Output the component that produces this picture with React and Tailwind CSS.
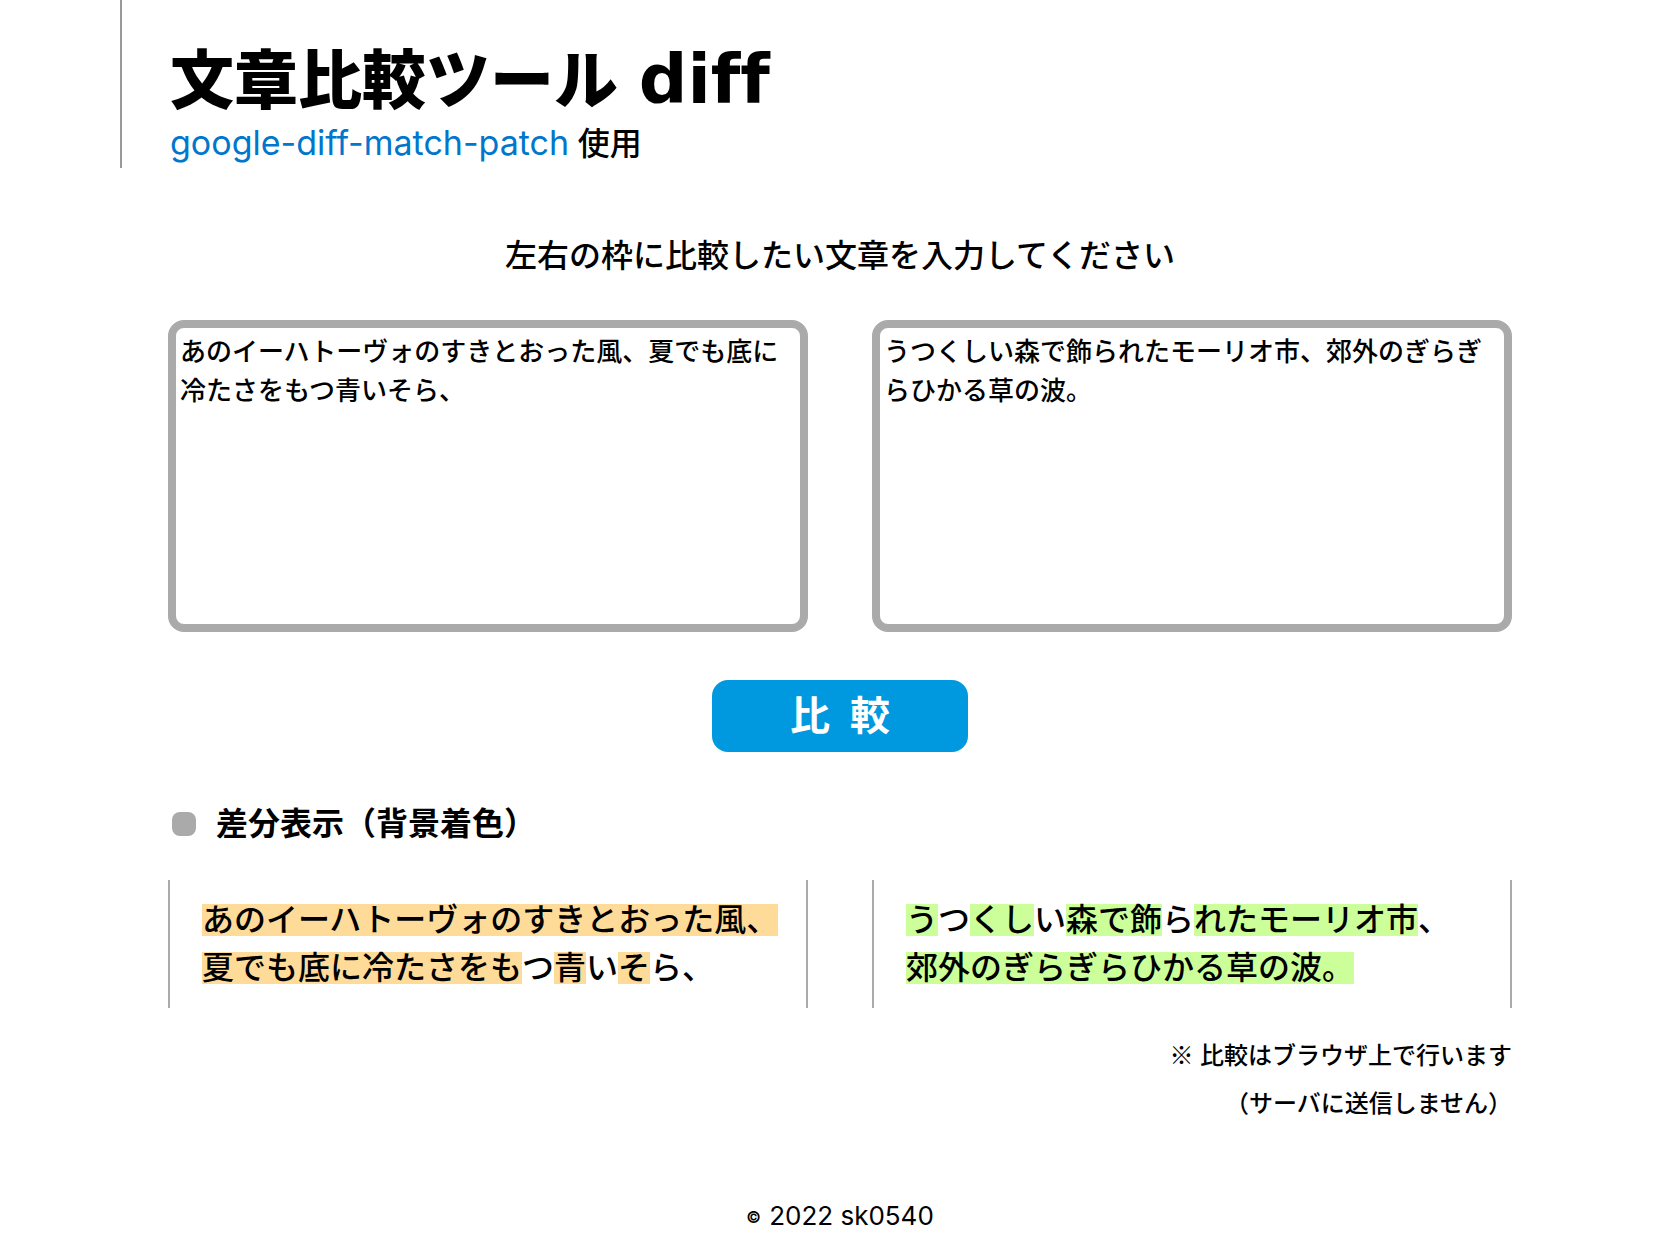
function Del({ children }) {
  return <del className="inline-block bg-[#ffdb99] leading-8 whitespace-nowrap no-underline">{children}</del>;
}

function Ins({ children }) {
  return <ins className="inline-block bg-[#ccff99] leading-8 whitespace-nowrap no-underline">{children}</ins>;
}

export default function App() {
  return (
    <div className="min-h-screen bg-white px-[120px] font-['Inter','Noto_Sans_CJK_JP',sans-serif] text-[32px] leading-[48px] font-medium text-black">
      <header className="h-[168px] border-l-2 border-[#999999] pl-12 pt-10">
        <h1 className="text-[64px] font-black leading-[80px]">
          文章比較ツール <span className="ml-2 font-['DejaVu_Sans'] text-[68px] leading-none font-bold [font-variant-ligatures:none]">diff</span>
        </h1>
        <p>
          <a href="#patch" className="text-[34px] leading-none font-normal text-[#0077cc]">google-diff-match-patch</a> 使用
        </p>
      </header>
      <main className="px-12 pt-16">
        <p className="text-center">左右の枠に比較したい文章を入力してください</p>
        <form onSubmit={(e) => e.preventDefault()}>
          <div className="mt-10 grid grid-cols-2 gap-16">
            <textarea
              aria-label="左の文章"
              className="h-[312px] resize-none rounded-2xl border-8 border-[#aaaaaa] px-1 py-1 text-[26px] leading-[39px] outline-none"
              defaultValue="あのイーハトーヴォのすきとおった風、夏でも底に冷たさをもつ青いそら、"
            />
            <textarea
              aria-label="右の文章"
              className="h-[312px] resize-none rounded-2xl border-8 border-[#aaaaaa] px-1 py-1 text-[26px] leading-[39px] outline-none"
              defaultValue="うつくしい森で飾られたモーリオ市、郊外のぎらぎらひかる草の波。"
            />
          </div>
          <button type="submit" className="mx-auto mt-12 flex h-18 w-64 items-center justify-center gap-5 rounded-2xl bg-[#0099e0] text-[40px] font-bold text-white">
            <span>比</span><span>較</span>
          </button>
        </form>
        <h2 className="mt-12 flex items-center gap-5 pl-1 font-bold">
          <span className="size-6 rounded-lg bg-[#aaaaaa]" />
          差分表示（背景着色）
        </h2>
        <div className="mt-8 grid grid-cols-2 gap-16">
          <p className="border-x-2 border-[#aaaaaa] py-4 pr-4 pl-8">
            <Del>あのイーハトーヴォのすきとおった風、</Del><br /><Del>夏でも底に冷たさをも</Del>つ<Del>青</Del>い<Del>そ</Del>ら、
          </p>
          <p className="border-x-2 border-[#aaaaaa] py-4 pr-4 pl-8">
            <Ins>う</Ins>つ<Ins>くし</Ins>い<Ins>森で飾</Ins>ら<Ins>れたモーリオ市</Ins>、<br /><Ins>郊外のぎらぎらひかる草の波。</Ins>
          </p>
        </div>
        <p className="mt-6 text-right text-[24px]">
          <span className="font-['Noto_Sans_CJK_JP'] leading-none">※</span> 比較はブラウザ上で行います<br />（サーバに送信しません）
        </p>
      </main>
      <footer className="mt-16 text-center text-[26px] font-normal">
        <span className="mr-px align-[2px] text-[16px] leading-none font-semibold">©</span> 2022 sk0540
      </footer>
    </div>
  );
}
